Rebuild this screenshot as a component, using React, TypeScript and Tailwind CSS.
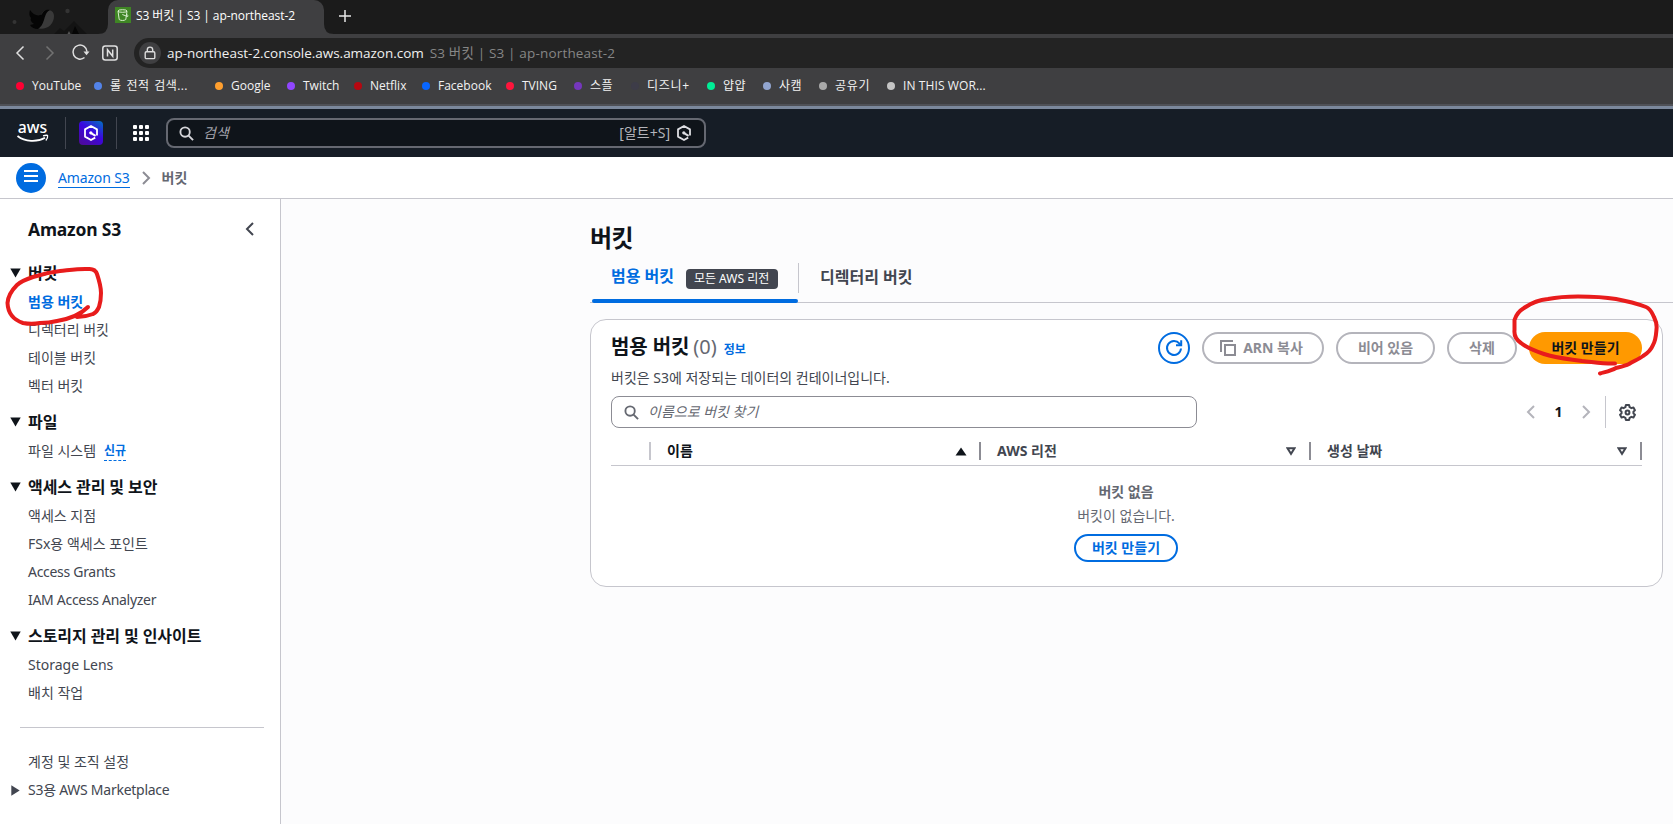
import React from 'react';

const uiFont = "font-['Noto_Sans','Noto_Sans_CJK_KR',sans-serif]";
const chromeFont = "font-['Open_Sans','Noto_Sans_CJK_KR',sans-serif]";

const bookmarks = [
  { label: 'YouTube', dot: 'bg-[#ff0033]', width: 'w-[78px]' },
  { label: '롤 전적 검색...', dot: 'bg-[#5383e8]', width: 'w-[121px] tracking-[0.4px] [word-spacing:1.5px]' },
  { label: 'Google', dot: 'bg-[#ff9f2e]', width: 'w-[72px]' },
  { label: 'Twitch', dot: 'bg-[#9146ff]', width: 'w-[67px]' },
  { label: 'Netflix', dot: 'bg-[#b60710]', width: 'w-[68px]' },
  { label: 'Facebook', dot: 'bg-[#0866ff]', width: 'w-[84px]' },
  { label: 'TVING', dot: 'bg-[#ff153c]', width: 'w-[68px]' },
  { label: '스플', dot: 'bg-[#7537bd]', width: 'w-[57px] tracking-[0.5px]' },
  { label: '디즈니+', dot: 'bg-[#3d3c48]', width: 'w-[76px] tracking-[0.7px]' },
  { label: '얍얍', dot: 'bg-[#00ee96]', width: 'w-[56px] tracking-[0.5px]' },
  { label: '사캠', dot: 'bg-[#92a5cf]', width: 'w-[56px] tracking-[0.5px]' },
  { label: '공유기', dot: 'bg-[#a9a9a9]', width: 'w-[68px] tracking-[0.7px]' },
  { label: 'IN THIS WOR...', dot: 'bg-[#c4c4c4]', width: 'w-[110px] tracking-[0.1px]' },
];

const sections = [
  { title: '버킷', items: ['범용 버킷', '디렉터리 버킷', '테이블 버킷', '벡터 버킷'] },
  { title: '파일', items: ['파일 시스템'] },
  {
    title: '액세스 관리 및 보안',
    items: ['액세스 지점', 'FSx용 액세스 포인트', 'Access Grants', 'IAM Access Analyzer'],
  },
  { title: '스토리지 관리 및 인사이트', items: ['Storage Lens', '배치 작업'] },
];

const tightItems = ['Access Grants', 'IAM Access Analyzer'];

const SearchIcon: React.FC<{ className: string }> = ({ className }) => (
  <svg className={className} viewBox="0 0 16 16" fill="none" stroke="currentColor" strokeWidth="2">
    <circle cx="6.5" cy="6.5" r="5" />
    <path d="M10.2 10.2 15 15" />
  </svg>
);

const HexIcon: React.FC<{ className: string }> = ({ className }) => (
  <svg className={className} viewBox="0 0 16 16" fill="none" stroke="currentColor" strokeWidth="1.8">
    <path d="M12.2 12.6 8 15 2 11.6V4.4L8 1 14 4.4V10.6" strokeLinejoin="round" />
    <path d="M7.6 7.8 12.6 10.8" strokeWidth="2" />
    <circle cx="7.8" cy="7.8" r="1.6" fill="currentColor" stroke="none" />
  </svg>
);

const Caret: React.FC<{ kind: 'down' | 'right' | 'up' | 'outline' }> = ({ kind }) => {
  if (kind === 'right') {
    return (
      <svg width="9" height="11" viewBox="0 0 9 11">
        <path d="M.3 .2 8.7 5.5 .3 10.8Z" fill="#424650" />
      </svg>
    );
  }
  if (kind === 'up') {
    return (
      <svg width="12" height="9" viewBox="0 0 12 9">
        <path d="M.5 8.5H11.5L6 .5Z" fill="#0f141a" />
      </svg>
    );
  }
  if (kind === 'outline') {
    return (
      <svg width="10" height="9" viewBox="0 0 10 9">
        <path d="M1.5 1.2H8.5L5 6.8Z" fill="none" stroke="#424650" strokeWidth="2" />
      </svg>
    );
  }
  return (
    <svg width="11" height="10" viewBox="0 0 11 10">
      <path d="M.3 .6H10.7L5.5 9.4Z" fill="#0f141a" />
    </svg>
  );
};

const Chevron: React.FC<{ dir: 'left' | 'right'; className: string }> = ({ dir, className }) => (
  <svg className={className} width="9" height="14" viewBox="0 0 9 14" fill="none" stroke="currentColor" strokeWidth="2">
    <path d={dir === 'left' ? 'M8 1 2 7 8 13' : 'M1 1 7 7 1 13'} />
  </svg>
);

const TabStrip = () => (
  <div className="flex h-[34px] bg-[#1b1b1b]">
    <svg width="108" height="34" viewBox="0 0 108 34">
      <circle cx="14.5" cy="22" r="2" fill="#343434" />
      <circle cx="67.5" cy="11" r="2.2" fill="#343434" />
      <path d="M36 28C46 31 54 25 54 16C54 12 51 10 48 10C44 10 42 12 41 16Z" fill="#3a3a3a" />
      <path d="M30 10C33 15 39 17 42 14C43 11 46 9 50 10C43 13 46 24 38 29C34 29 31 27 30 25L34 24C31 22 30 20 31 18C29 16 29 13 30 10Z" fill="#050505" />
      <path d="M54 34 60 28 64 31 74 21 87 34Z" fill="#131313" />
      <path d="M72 34 75 26 79 34Z" fill="#050505" />
      <path d="M67.500 34 69 31 70.500 34Z" fill="#555" />
      <path d="M98 34Q108 34 108 24V34Z" fill="#3f3f41" />
    </svg>
    <div className="flex w-[216px] items-center rounded-t-[10px] bg-[#3f3f41] pb-1 pl-[7px]">
      <svg width="16" height="16" viewBox="0 0 16 16">
        <rect width="16" height="16" fill="#3f8624" />
        <g fill="none" stroke="#d9efcf" strokeWidth="1">
          <ellipse cx="7.5" cy="4" rx="4.5" ry="1.3" />
          <path d="M3 4.2 4.2 12.5C5.5 13.8 9.5 13.8 10.8 12.5L12 4.2" />
          <path d="M7.3 7.5 12.5 9.5C13.5 9.5 13.2 8 11.6 7.6" />
        </g>
      </svg>
      <span className="mt-[2px] ml-[5px] text-[12px] tracking-[-0.07px] whitespace-nowrap text-white">
        S3 버킷 | S3 | ap-northeast-2
      </span>
    </div>
    <svg width="50" height="34" viewBox="0 0 50 34">
      <path d="M0 24Q0 34 10 34H0Z" fill="#3f3f41" />
      <path d="M21 10V22M15 16H27" stroke="#e8e8e8" strokeWidth="1.5" />
    </svg>
  </div>
);

const AddressBar = () => (
  <div className="flex h-[34px] items-end">
    <div className="flex h-[30px] w-[134px] items-center">
      <svg width="134" height="30" viewBox="0 0 134 30" fill="none" strokeWidth="1.5">
        <path d="M23.5 8.5 17 15 23.5 21.5" stroke="#e0e0e0" />
        <path d="M46.5 8.5 53 15 46.5 21.5" stroke="#727272" />
        <path d="M84.5 19.5A7 7 0 1 1 87 13.8" stroke="#e0e0e0" />
        <path d="M83.5 13.5H89.5L86.5 17.2Z" fill="#e0e0e0" />
        <rect x="102.8" y="8" width="14.4" height="14" rx="2.5" stroke="#e0e0e0" />
        <path d="M107.5 18.5V11.7L112.7 18.3V11.5" stroke="#e0e0e0" />
      </svg>
    </div>
    <div className="flex h-[30px] flex-1 items-center rounded-l-full bg-[#232323] pl-[5px]">
      <div className="flex size-[22px] items-center justify-center rounded-full bg-[#3f3f41]">
        <svg width="12" height="14" viewBox="0 0 12 14" fill="none" stroke="#dcdcdc" strokeWidth="1.4">
          <rect x="1.2" y="5.8" width="9.6" height="6.8" rx="1.2" />
          <path d="M3.3 5.8V3.8A2.7 2.7 0 0 1 8.7 3.8V5.8" />
        </svg>
      </div>
      <span className="ml-[6px] text-[13.5px] tracking-[-0.03px] text-[#f0f0f0]">
        ap-northeast-2.console.aws.amazon.com
      </span>
      <span className="ml-[6px] text-[13.5px] tracking-[0.17px] text-[#868686]">S3 버킷 | S3 | ap-northeast-2</span>
    </div>
  </div>
);

const Bookmarks = () => (
  <div className="flex h-9 items-center pl-4">
    {bookmarks.map(({ label, dot, width }) => (
      <div key={label} className={`flex shrink-0 items-center gap-2 ${width}`}>
        <span className={`size-2 shrink-0 rounded-full ${dot}`} />
        <span className="text-[12px] whitespace-nowrap text-[#f2f2f2]">{label}</span>
      </div>
    ))}
  </div>
);

const AwsHeader = () => (
  <div className="flex h-12 items-center bg-[#161d26] text-white">
    <svg className="ml-4 overflow-visible" width="34" height="26" viewBox="0 0 34 26">
      <text x="1.8" y="13" fontSize="17" fontWeight="500" textLength="29.500" lengthAdjust="spacingAndGlyphs" fill="#fff">
        aws
      </text>
      <path d="M1.5 16C9 22 21 22.5 29 17.8" fill="none" stroke="#fff" strokeWidth="1.7" />
      <path d="M27 15.8C30 15 31.5 15.2 31.6 15.7 31.8 16.7 31 19.2 29.8 20.5" fill="none" stroke="#fff" strokeWidth="1.3" />
    </svg>
    <div className="ml-[15px] h-8 w-px bg-[#424650]" />
    <div className="ml-[13px] flex size-6 items-center justify-center rounded bg-[linear-gradient(35deg,#4c0a9e_10%,#3b06e0_55%,#0073c0_100%)]">
      <HexIcon className="size-4" />
    </div>
    <div className="ml-[13px] h-8 w-px bg-[#424650]" />
    <div className="ml-4 grid grid-cols-3 gap-[2px]">
      {Array.from({ length: 9 }, (_, i) => (
        <span key={i} className="size-1 rounded-[1px] bg-white" />
      ))}
    </div>
    <div className="ml-[17px] flex h-[30px] w-[540px] items-center rounded-lg border-2 border-[#656871] bg-[#0f141a] pr-[12px] pl-[11px]">
      <SearchIcon className="size-[15px] text-[#d5d5da]" />
      <span className="ml-[9px] flex-1 text-sm text-[#a4a4ad] italic">검색</span>
      <span className="mr-[6px] text-sm text-[#b4b4bb]">[알트+S]</span>
      <HexIcon className="size-4 text-[#dedee3]" />
    </div>
  </div>
);

const Breadcrumb = () => (
  <div className="flex h-[42px] items-center border-b border-[#c6c6cd] bg-white pt-px pl-4 text-sm">
    <div className="flex size-[30px] flex-col items-center gap-[3px] rounded-full bg-[#006ce0] pt-[7px]">
      <span className="h-[2px] w-[14px] bg-white" />
      <span className="h-[2px] w-[14px] bg-white" />
      <span className="h-[2px] w-[14px] bg-white" />
    </div>
    <span className="ml-3 border-b border-[#006ce0] leading-[19px] tracking-[-0.15px] text-[#006ce0]">Amazon S3</span>
    <Chevron dir="right" className="ml-3 text-[#8c8c94]" />
    <span className="ml-[11px] font-bold text-[#656871]">버킷</span>
  </div>
);

const Sidebar = () => (
  <nav className="w-[281px] shrink-0 border-r border-[#c6c6cd] bg-white text-sm text-[#424650]">
    <div className="flex h-[60px] items-center justify-between pr-[26px] pl-7">
      <span className="text-[17.5px] font-bold tracking-[-0.2px] text-[#0f141a]">Amazon S3</span>
      <Chevron dir="left" className="text-[#424650]" />
    </div>
    <div className="flex flex-col gap-[9px]">
      {sections.map((section) => (
        <div key={section.title}>
          <div className="flex h-7 items-center gap-[7.5px] pl-[9.5px]">
            <Caret kind="down" />
            <span className="text-base font-bold tracking-[-0.08px] text-[#0f141a]">{section.title}</span>
          </div>
          {section.items.map((item) => (
            <div key={item} className="flex h-7 items-center pt-px pl-7">
              <span
                className={`${item === '범용 버킷' ? 'font-bold text-[#006ce0]' : ''} ${tightItems.includes(item) ? 'tracking-[-0.3px]' : ''}`}
              >
                {item}
              </span>
              {item === '파일 시스템' && (
                <span className="mt-px ml-2 border-b border-dashed border-[#006ce0] text-xs leading-[18px] font-bold text-[#006ce0]">
                  신규
                </span>
              )}
            </div>
          ))}
        </div>
      ))}
    </div>
    <div className="mt-[21px] mr-4 ml-5 h-px bg-[#c6c6cd]" />
    <div className="mt-[20px] flex h-7 items-center pl-7">계정 및 조직 설정</div>
    <div className="flex h-7 items-center gap-[8px] pl-[11px]">
      <Caret kind="right" />
      <span className="tracking-[-0.26px]">S3용 AWS Marketplace</span>
    </div>
  </nav>
);

const Tabs = () => (
  <div className="flex h-[46px] border-b border-[#c6c6cd] text-base font-bold">
    <div className="relative flex w-[208px] items-start pt-2 pl-[21px]">
      <span className="leading-[23px] text-[#006ce0]">범용 버킷</span>
      <span className="mt-[4px] ml-[12px] flex h-5 w-[92px] items-center justify-center rounded bg-[#424650] pr-px text-xs font-normal text-white">
        모든 AWS 리전
      </span>
      <span className="absolute -bottom-px left-[2px] h-1 w-[206px] rounded-full bg-[#006ce0]" />
    </div>
    <div className="mt-[6px] h-[30px] w-px bg-[#c6c6cd]" />
    <div className="pt-2 pl-[21px] leading-6 text-[#424650]">디렉터리 버킷</div>
  </div>
);

const disabledButton =
  'flex h-8 items-center justify-center rounded-full border-2 border-[#b4b4bb] font-bold text-[#8c8c94]';

const columns = [
  { label: '이름', sort: 'up' as const, style: 'w-[330px] pr-3 text-[#0f141a]' },
  { label: 'AWS 리전', sort: 'outline' as const, style: 'w-[330px] pr-[13px] text-[#424650]' },
  { label: '생성 날짜', sort: 'outline' as const, style: 'w-[331px] pr-[13px] text-[#424650]' },
];

const BucketCard = () => (
  <div className="mt-4 mr-[10px] h-[268px] rounded-2xl border border-[#c6c6cd] bg-white px-5 pt-3 text-sm">
    <div className="flex items-start">
      <div className="flex flex-1 items-baseline pt-px leading-7">
        <span className="text-xl font-bold tracking-[-0.1px] text-[#0f141a]">범용 버킷</span>
        <span className="ml-1 text-xl text-[#656871]">(0)</span>
        <span className="ml-[7px] text-xs font-bold text-[#006ce0]">정보</span>
      </div>
      <div className="flex gap-3">
        <div className="flex size-8 items-center justify-center rounded-full border-2 border-[#006ce0]">
          <svg width="18" height="18" viewBox="0 0 18 18" fill="none" stroke="#006ce0" strokeWidth="2">
            <path d="M16 9.5A7 7 0 1 1 14.5 4.6L16 6.2" />
            <path d="M16.2 1.2V6.2H11" />
          </svg>
        </div>
        <div className={`${disabledButton} w-[122px] gap-[7px] pr-[3px]`}>
          <svg width="16" height="16" viewBox="0 0 16 16" fill="none" stroke="#8c8c94" strokeWidth="2">
            <path d="M1 12V1H13" />
            <rect x="5" y="5" width="10" height="10" />
          </svg>
          ARN 복사
        </div>
        <div className={`${disabledButton} w-[99px]`}>비어 있음</div>
        <div className={`${disabledButton} w-[70px]`}>삭제</div>
        <div className="flex h-8 w-[113px] items-center justify-center rounded-full bg-[#ff9900] font-bold text-[#0f141a]">
          버킷 만들기
        </div>
      </div>
    </div>
    <p className="mt-[4px] leading-5 text-[#424650]">버킷은 S3에 저장되는 데이터의 컨테이너입니다.</p>
    <div className="mt-2 flex h-8 items-center justify-between">
      <div className="flex h-8 w-[586px] items-center rounded-lg border border-[#8c8c94] pl-3">
        <SearchIcon className="size-[15px] text-[#656871]" />
        <span className="ml-[9px] text-[#656871] italic">이름으로 버킷 찾기</span>
      </div>
      <div className="flex h-8 items-center">
        <Chevron dir="left" className="text-[#b4b4bb]" />
        <span className="w-[47px] text-center font-bold text-[#0f141a]">1</span>
        <Chevron dir="right" className="text-[#b4b4bb]" />
        <div className="ml-[14px] h-8 w-px bg-[#c6c6cd]" />
        <svg className="mr-[6px] ml-[13px]" width="17" height="17" viewBox="0 0 16 16" fill="none" stroke="#424650" strokeWidth="1.9" strokeLinejoin="round">
          <path d="M6.5 1H9.5L10 3 11.7 3.9 13.6 3.3 15 5.8 13.6 7.2V8.8L15 10.2 13.6 12.7 11.7 12.1 10 13 9.5 15H6.5L6 13 4.3 12.1 2.4 12.7 1 10.2 2.4 8.8V7.2L1 5.8 2.4 3.3 4.3 3.9 6 3Z" />
          <circle cx="8" cy="8" r="1.8" />
        </svg>
      </div>
    </div>
    <div className="flex h-[38px] border-b border-[#c6c6cd] pt-[14px] font-bold">
      <div className="h-[18px] w-10 border-r-2 border-[#c6c6cd]" />
      {columns.map(({ label, sort, style }) => (
        <div key={label} className={`flex h-[18px] items-center justify-between border-r-2 border-[#8c8c94] pl-4 ${style}`}>
          <span>{label}</span>
          <Caret kind={sort} />
        </div>
      ))}
    </div>
    <div className="flex flex-col items-center pt-4 pr-px text-[#656871]">
      <span className="leading-5 font-bold">버킷 없음</span>
      <span className="mt-1 leading-5">버킷이 없습니다.</span>
      <div className="mt-2 flex h-7 w-[104px] items-center justify-center rounded-full border-2 border-[#006ce0] font-bold text-[#006ce0]">
        버킷 만들기
      </div>
    </div>
  </div>
);

// hand-drawn pen marks over the page
const PenMarks = () => (
  <svg
    className="pointer-events-none absolute inset-0"
    width="1673"
    height="824"
    viewBox="0 0 1673 824"
    fill="none"
    stroke="#e81c1c"
    strokeWidth="4"
    strokeLinecap="round"
    strokeLinejoin="round"
  >
    <path d="M88 307C81 314 69 319 57 321C49 323 45 323 40 323C35 324 28 324 23 323C14 320 8 314 7.500 303C8 296 12 290 17 285C21 281 27 279 33 277C42 274 51 272 60 271C70 270 80 268.500 88 269C93 268.500 96 271 97 274C99 280 101 286 101 293C101 299 100 304 99 307C97 311 96 313 93 314C88 316 83 317 77 317" />
    <path d="M1615 363.500C1604 364 1593 362 1582 361C1569 359 1556 358 1544 354C1535 351 1527 348 1521 343C1515 339 1514 335 1514.500 330V320C1516 315 1519 311 1524 308C1531 303 1539 300 1548 299C1558 297 1568 296.500 1578 296.500C1591 296.500 1604 297 1616 299C1627 301 1638 304 1646 307C1651 309 1652 313 1654 317C1656 321 1657 325 1656.500 329C1656 335 1656 340 1653 345C1651 350 1648 353 1643 356C1639 359 1634 361 1629 364C1625 366 1620 367 1616 368C1611 371 1605 372 1600 373.500" />
  </svg>
);

const App: React.FC = () => {
  return (
    <div className={`relative flex h-[824px] w-[1673px] flex-col overflow-hidden bg-[#fcfcfd] ${uiFont}`}>
      <div className={`h-[109px] border-b-[3px] border-[#7b889c] bg-[#3f3f41] ${chromeFont}`}>
        <TabStrip />
        <AddressBar />
        <Bookmarks />
        <div className="h-[2px] bg-[#4f5157]" />
      </div>
      <AwsHeader />
      <Breadcrumb />
      <div className="flex flex-1">
        <Sidebar />
        <main className="flex-1 pl-[309px]">
          <h1 className="h-[58px] pt-[23px] text-2xl leading-8 font-bold tracking-[-0.5px] text-[#0f141a]">버킷</h1>
          <Tabs />
          <BucketCard />
        </main>
      </div>
      <PenMarks />
    </div>
  );
};

export default App;
